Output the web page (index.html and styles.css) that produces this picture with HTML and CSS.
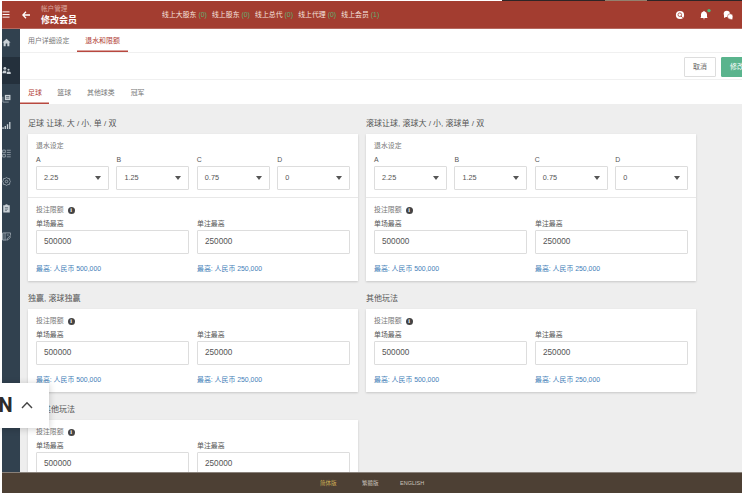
FILE: index.html
```html
<!DOCTYPE html>
<html lang="zh-Hans">
<head>
<meta charset="utf-8">
<title>修改会员</title>
<link rel="stylesheet" href="styles.css">
</head>
<body>
<div class="app">
  <div class="window-edge"><i></i><b></b><i></i></div>
  <header class="header">
    <svg class="burger" viewBox="0 0 8 8"><path d="M0 1h8M0 4h8M0 7h8"/></svg>
    <svg class="back" viewBox="0 0 8 8"><path d="M8 4H1M4 .8L.8 4 4 7.2"/></svg>
    <div class="heading"><span>帐户管理</span><h1>修改会员</h1></div>
    <div class="online">
      <span>线上大股东 <em>(0)</em></span><span>线上股东 <em>(0)</em></span><span>线上总代 <em>(0)</em></span><span>线上代理 <em>(0)</em></span><span>线上会员 <em>(1)</em></span>
    </div>
    <div class="tools">
      <svg viewBox="0 0 10 10"><circle cx="5" cy="5" r="4.1" fill="#fff"/><circle cx="4.8" cy="4.7" r="1.8" fill="none" stroke="#a33d30" stroke-width=".8"/><path d="M6 6l1.7 1.7" stroke="#a33d30" stroke-width=".9"/></svg>
      <svg viewBox="0 0 10 10"><path d="M2 7.2V4.3Q2.1 2 4.3 1.6L5 .8l.7.8Q7.9 2 8 4.3v2.9l.8.9H1.2z" fill="#fff"/><path d="M4 8.6h2L5 9.6z" fill="#fff"/><circle cx="10" cy=".6" r="1.7" fill="#4dbb7c"/></svg>
      <svg viewBox="0 0 10 10"><circle cx="3.8" cy="3.8" r="3.1" fill="#fff"/><path d="M1 8V4l3 2.5z" fill="#fff"/><circle cx="7.2" cy="6.5" r="2.7" fill="#fff" stroke="#a33d30" stroke-width=".5"/><path d="M9.3 9.5V7L7 9z" fill="#fff"/></svg>
    </div>
  </header>

  <div class="body">
    <nav class="side">
      <a><svg viewBox="0 0 10 10"><path class="f" d="M5 .8L.5 5h1.3v4.3h2.3V6.2h1.8v3.1h2.3V5h1.3z"/></svg></a>
      <a class="on"><svg viewBox="0 0 10 10"><circle class="f" cx="3.2" cy="2.7" r="1.6"/><circle class="f" cx="7.2" cy="4.2" r="1.2"/><path class="f" d="M.6 8V6.6Q1 5 3.2 5q1 0 1.5.3V8zM5.3 9V7.1Q5.6 6 7.3 6 9.5 6 9.7 7.1V9z"/></svg></a>
      <a><svg viewBox="0 0 10 10"><path class="f" d="M3.2 1h6.2v5.8H3.2z"/><path class="s" d="M1 3v6h6.5"/><path d="M4.5 2.8h3.6M4.5 4.6h3.6" stroke="#31414f" stroke-width=".7"/></svg></a>
      <a><svg viewBox="0 0 10 10"><path class="f" d="M.4 7h1.5v2H.4zM2.9 5.5h1.5V9H2.9zM5.4 3.5h1.5V9H5.4zM7.9 1h1.5v8H7.9z"/></svg></a>
      <a><svg viewBox="0 0 10 10"><path class="s" d="M.7 1.2h3v2.9h-3zM.7 6h3v2.9h-3zM5.3 1.4h4.4M5.3 3.8h4.4M5.3 6.3h4.4M5.3 8.7h4.4"/></svg></a>
      <a><svg viewBox="0 0 10 10"><path class="s" d="M5 .6l1.5 1 1.9.2.2 1.9 1 1.3-1 1.3-.2 1.9-1.9.2-1.5 1-1.5-1-1.9-.2-.2-1.9-1-1.3 1-1.3.2-1.9 1.9-.2z"/><circle class="s" cx="5" cy="5" r="1.4"/></svg></a>
      <a><svg viewBox="0 0 10 10"><path class="f" d="M1.4 1.3h2Q3.7.2 5 .2t1.6 1.1h2v8.2H1.4z"/><path d="M3.2 4h3.6M3.2 5.7h3.6M3.2 7.3h2.3" stroke="#31414f" stroke-width=".6"/></svg></a>
      <a><svg viewBox="0 0 10 10"><path class="s" d="M5 9H.8V1h8.6v3M.8 1v8M3.4 1v8M5.4 3.4h2M5.5 9l.4-1.8L9 4.3l.9.9L7 8.4z"/></svg></a>
    </nav>

    <main class="main">
      <div class="tabs top"><a>用户详细设定</a><a class="on">退水和限额</a></div>
      <div class="actions"><button>取消</button><button class="save">修改</button></div>
      <div class="tabs sub"><a class="on">足球</a><a>篮球</a><a>其他球类</a><a>冠军</a></div>
      <div class="content">
        <section>
          <h2>足球 让球, 大 / 小, 单 / 双</h2>
          <div class="card">
            <div class="rates">
              <p>退水设定</p>
              <div class="row4">
                <div><label>A</label><div class="select">2.25</div></div>
                <div><label>B</label><div class="select">1.25</div></div>
                <div><label>C</label><div class="select">0.75</div></div>
                <div><label>D</label><div class="select">0</div></div>
              </div>
            </div>
            <div class="limits">
              <p>投注限额<i class="info">i</i></p>
              <div class="row2">
                <div><label>单场最高</label><div class="input">500000</div><small>最高: 人民币 500,000</small></div>
                <div><label>单注最高</label><div class="input">250000</div><small>最高: 人民币 250,000</small></div>
              </div>
            </div>
          </div>
        </section>
        <section>
          <h2>滚球让球, 滚球大 / 小, 滚球单 / 双</h2>
          <div class="card">
            <div class="rates">
              <p>退水设定</p>
              <div class="row4">
                <div><label>A</label><div class="select">2.25</div></div>
                <div><label>B</label><div class="select">1.25</div></div>
                <div><label>C</label><div class="select">0.75</div></div>
                <div><label>D</label><div class="select">0</div></div>
              </div>
            </div>
            <div class="limits">
              <p>投注限额<i class="info">i</i></p>
              <div class="row2">
                <div><label>单场最高</label><div class="input">500000</div><small>最高: 人民币 500,000</small></div>
                <div><label>单注最高</label><div class="input">250000</div><small>最高: 人民币 250,000</small></div>
              </div>
            </div>
          </div>
        </section>
        <section>
          <h2>独赢, 滚球独赢</h2>
          <div class="card">
            <div class="limits">
              <p>投注限额<i class="info">i</i></p>
              <div class="row2">
                <div><label>单场最高</label><div class="input">500000</div><small>最高: 人民币 500,000</small></div>
                <div><label>单注最高</label><div class="input">250000</div><small>最高: 人民币 250,000</small></div>
              </div>
            </div>
          </div>
        </section>
        <section>
          <h2>其他玩法</h2>
          <div class="card">
            <div class="limits">
              <p>投注限额<i class="info">i</i></p>
              <div class="row2">
                <div><label>单场最高</label><div class="input">500000</div><small>最高: 人民币 500,000</small></div>
                <div><label>单注最高</label><div class="input">250000</div><small>最高: 人民币 250,000</small></div>
              </div>
            </div>
          </div>
        </section>
        <section>
          <h2 class="indent">其他玩法</h2>
          <div class="card">
            <div class="limits">
              <p>投注限额<i class="info">i</i></p>
              <div class="row2">
                <div><label>单场最高</label><div class="input">500000</div></div>
                <div><label>单注最高</label><div class="input">250000</div></div>
              </div>
            </div>
          </div>
        </section>
      </div>
    </main>
  </div>
  <footer class="footer"><a class="on">简体版</a><a>繁體版</a><a class="en">ENGLISH</a></footer>
</div>
<div class="drawer"><b>N</b><svg viewBox="0 0 12 8"><path d="M1 7l5-5.3L11 7"/></svg></div>
</body>
</html>
```

FILE: styles.css
```css
* { box-sizing: border-box; }
body {
  margin: 0;
  width: 743px;
  height: 494px;
  overflow: hidden;
  background: #fff;
  font: 6.9px/10px "Liberation Sans", "Noto Sans CJK SC", sans-serif;
  color: #666;
}
h1, h2, p { margin: 0; font-weight: normal; }
em, i { font-style: normal; }
.app { margin: 0 1px 0 2px; display: flex; flex-direction: column; height: 494px; }

.window-edge { display: flex; height: 1px; flex: none; padding-left: 500px; }
.window-edge i { width: 103px; background: #2e2526; }
.window-edge b { width: 42px; background: #93816f; }
.window-edge i:last-child { flex: 1; }

.header { display: flex; flex: none; align-items: center; height: 28px; background: #a33d30; color: #fff; border-bottom: 1px solid #b5685e; }
.header svg { flex: none; }
.burger { width: 8px; height: 7px; stroke: #fff; stroke-width: 1.1; fill: none; }
.back { width: 8px; height: 8px; margin-left: 12px; stroke: #fff; stroke-width: 1.3; fill: none; }
.heading { margin-left: 11px; width: 121px; }
.heading span { display: block; font-size: 6.6px; line-height: 10px; color: #dba79f; }
.heading h1 { font-size: 9px; font-weight: bold; line-height: 12px; }
.online { display: flex; flex: 1; gap: 5.2px; color: #f6e3df; white-space: nowrap; }
.online em { color: #5fb274; }
.tools { display: flex; gap: 14px; padding-right: 9px; }
.tools svg { width: 10px; height: 10px; overflow: visible; }

.body { display: flex; flex: none; height: 443px; }
.side { width: 18px; flex: none; background: #31414f; }
.side a { display: flex; align-items: center; height: 27.7px; }
.side a.on { background: #24303c; }
.side svg { width: 9px; height: 9px; margin-left: -.5px; }
.f { fill: #c9d0d6; }
.s { fill: none; stroke: #aeb8c0; stroke-width: .8; }

.main { flex: 1; min-width: 0; display: flex; flex-direction: column; background: #eee; }
.tabs { display: flex; flex: none; background: #fff; }
.tabs a { padding: 0 8px; line-height: 23px; color: #777; }
.tabs a.on { color: #b03d35; box-shadow: inset 0 -1.4px #b8483f; }
.tabs.top { height: 24px; border-bottom: 1px solid #f0f0f0; }
.tabs.sub { height: 24px; }
.tabs.sub a { line-height: 25px; }
.tabs.sub a.on { padding-right: 7.5px; }
.actions { display: flex; flex: none; justify-content: flex-end; height: 27px; padding-top: 4px; gap: 5px; background: #fff; border-bottom: 1px solid #f0f0f0; overflow: hidden; }
.actions button { width: 32px; height: 20px; flex: none; padding: 0; border: 1px solid #ddd; border-radius: 1px; background: #fff; font: inherit; color: #666; }
.actions .save { width: 32px; margin-right: -11px; border-color: #5ab48d; background: #5ab48d; color: #fff; }

.content { flex: 1; min-height: 0; overflow: hidden; display: grid; grid-template-columns: 330px 330px; align-content: start; column-gap: 8px; padding: 8px 0 0 8px; }
h2 { height: 22px; font-size: 8px; line-height: 23px; color: #555; white-space: nowrap; }
h2.indent { padding-left: 15px; }
.card { background: #fff; box-shadow: 0 1px 2px rgba(0, 0, 0, .16); margin-bottom: 6px; }
.card p { height: 14px; line-height: 14px; color: #777; display: flex; align-items: center; }
label { display: block; color: #555; white-space: nowrap; }
.rates { height: 64px; padding: 5px 8px 0; border-bottom: 1px solid #e8e8e8; }
.row4 { display: grid; grid-template-columns: repeat(4, 1fr); gap: 7.6px; }
.row4 label { height: 13px; line-height: 14px; }
.select, .input { height: 24px; border: 1px solid #ddd; border-radius: 1px; padding: 0 7px; line-height: 22px; color: #555; }
.select { display: flex; justify-content: space-between; align-items: center; font-size: 7.3px; }
.select::after { content: ""; border: 3px solid transparent; border-top: 4.5px solid #555; border-bottom: 0; }
.input { font-size: 8.2px; }
.limits { height: 83px; padding: 5px 8px 0; }
.info { width: 7px; height: 7px; margin-left: 4px; border-radius: 50%; background: #444; color: #fff; font: bold 6px/7px "Liberation Serif", serif; text-align: center; }
.row2 { display: grid; grid-template-columns: 1fr 1fr; gap: 8px; }
.row2 label { height: 13px; line-height: 13px; }
small { display: block; margin-top: 10px; font-size: 6.9px; line-height: 10px; color: #4380b8; white-space: nowrap; }

.footer { display: flex; flex: none; height: 21px; padding-left: 318px; background: #4d4034; border-top: 1px solid #89817a; color: #c9c2bb; font-size: 5.5px; line-height: 20px; }
.footer a { width: 42px; }
.footer a:nth-child(2) { width: 38px; }
.footer .on { color: #cfae54; }

.drawer { position: absolute; left: 0; top: 383px; width: 49px; height: 45px; display: flex; align-items: center; background: #fff; box-shadow: 0 1px 7px rgba(0, 0, 0, .2); }
.drawer b { width: 21px; margin-left: -1.5px; font: bold 20px/45px Roboto, sans-serif; color: #2b2b2b; }
.drawer svg { width: 12px; height: 8px; margin: 0 0 1px 1px; fill: none; stroke: #444; stroke-width: 1.4; }
```
